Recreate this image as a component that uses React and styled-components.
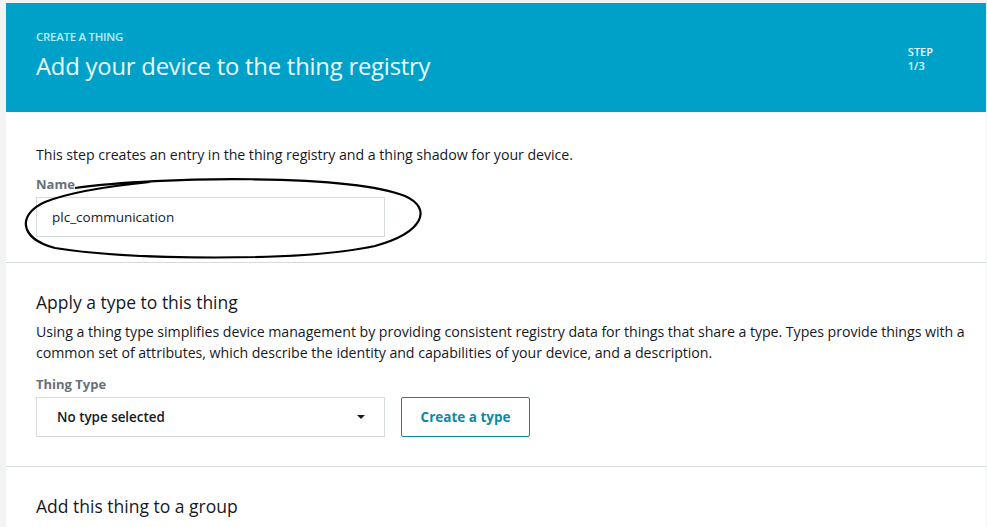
import React from 'react';
import styled, { createGlobalStyle } from 'styled-components';

const Global = createGlobalStyle`
  html, body { margin: 0; padding: 0; background: #f2f3f3; }
  body { font-family: 'Open Sans', 'Noto Sans', Arial, sans-serif; color: #16191f; }
`;

const Page = styled.div`
  padding: 3px 1px 0 6px;
  height: 524px;
  overflow: hidden;
`;

const Card = styled.div`
  background: #fff;
  height: 100%;
  position: relative;
`;

const Header = styled.div`
  background: #00a1c9;
  height: 109px;
  display: flex;
  justify-content: space-between;
  padding: 0 53px 0 30px;
  box-sizing: border-box;
`;

const HeaderText = styled.div`
  padding-top: 26px;
`;

const Eyebrow = styled.div`
  font-size: 11.5px;
  font-weight: 600;
  letter-spacing: -0.3px;
  color: #b6eefa;
  line-height: 15px;
`;

const Title = styled.h1`
  margin: 6px 0 0;
  font-size: 23.8px;
  font-weight: 400;
  color: #eafaff;
  letter-spacing: -0.2px;
`;

const Step = styled.div`
  padding-top: 42px;
  font-size: 11px;
  font-weight: 600;
  line-height: 14px;
  color: #e6f9fd;
`;

const Section = styled.div`
  padding: ${p => p.$top}px 1px ${p => p.$bottom}px 30px;
  border-bottom: ${p => (p.$last ? 'none' : '1px solid #d5dbdb')};
`;

const Heading = styled.h2`
  margin: 0 0 7px;
  font-size: 17.5px;
  font-weight: 400;
  color: #16191f;
`;

const Text = styled.p`
  margin: 0;
  font-size: 14.2px;
  letter-spacing: -0.05px;
  line-height: 21px;
  color: #16191f;
`;

const Label = styled.div`
  margin-top: ${p => p.$top}px;
  font-size: 13px;
  font-weight: 700;
  color: #687078;
  line-height: 18px;
`;

const Row = styled.div`
  display: flex;
  gap: 16px;
  margin-top: 4px;
`;

const Input = styled.div`
  width: 349px;
  height: 40px;
  box-sizing: border-box;
  border: 1px solid #d5dbdb;
  padding: 0 15px;
  display: flex;
  align-items: center;
  font-size: 13.5px;
  color: #16191f;
`;

const Select = styled(Input)`
  justify-content: space-between;
  padding: 0 19px 0 20px;
  font-weight: 600;
  font-size: 13.4px;
`;

const Caret = styled.span`
  width: 0;
  height: 0;
  border-left: 4px solid transparent;
  border-right: 4px solid transparent;
  border-top: 4px solid #16191f;
`;

const Button = styled.button`
  width: 129px;
  height: 40px;
  background: #fff;
  border: 1px solid #0a8aa8;
  border-radius: 2px;
  color: #0a8aa8;
  font-family: inherit;
  font-size: 13.5px;
  font-weight: 700;
`;

const Annotation = styled.svg`
  position: absolute;
  left: 14px;
  top: 170px;
  pointer-events: none;
`;

export default function App() {
  return (
    <>
      <Global />
      <Page>
        <Card>
          <Header>
            <HeaderText>
              <Eyebrow>CREATE A THING</Eyebrow>
              <Title>Add your device to the thing registry</Title>
            </HeaderText>
            <Step>STEP<br />1/3</Step>
          </Header>

          <Section $top={32} $bottom={25}>
            <Text>This step creates an entry in the thing registry and a thing shadow for your device.</Text>
            <Label $top={10}>Name</Label>
            <Row>
              <Input>plc_communication</Input>
            </Row>
          </Section>

          <Section $top={27} $bottom={29}>
            <Heading>Apply a type to this thing</Heading>
            <Text>
              Using a thing type simplifies device management by providing consistent registry data for things that share a type. Types provide things with a common set of attributes, which describe the identity and capabilities of your device, and a description.
            </Text>
            <Label $top={12}>Thing Type</Label>
            <Row>
              <Select>No type selected<Caret /></Select>
              <Button>Create a type</Button>
            </Row>
          </Section>

          <Section $top={27} $bottom={0} $last>
            <Heading>Add this thing to a group</Heading>
          </Section>

          <Annotation width="410" height="90" viewBox="0 0 410 90">
            <path
              d="M55 15 C140 3 330 1 385 23 C412 35 405 59 355 73 C280 89 110 87 35 75 C-2 65 -2 41 25 29 C50 19 90 13 130 9"
              fill="none"
              stroke="#000"
              strokeWidth="2.2"
            />
          </Annotation>
        </Card>
      </Page>
    </>
  );
}
